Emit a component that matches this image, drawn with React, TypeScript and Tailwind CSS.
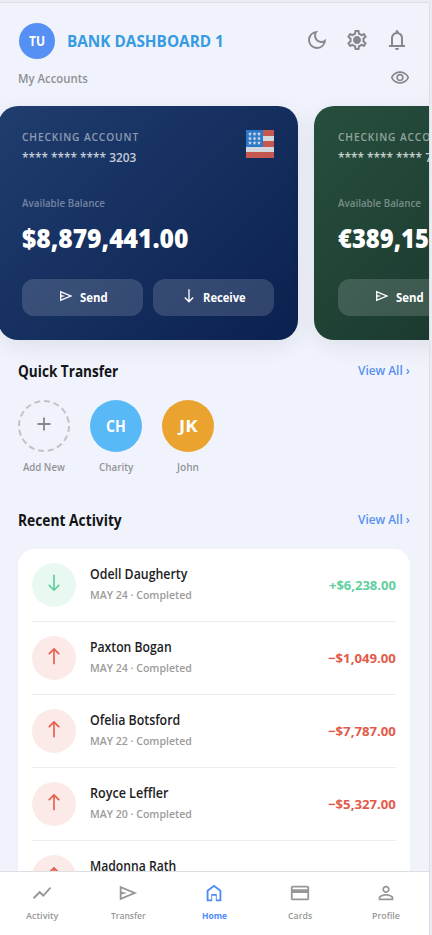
import { useLayoutEffect, useRef, useState } from "react";
import type { ReactNode } from "react";
import {
  MdOutlineDarkMode,
  MdOutlineSettings,
  MdOutlineVisibility,
  MdShowChart,
  MdOutlineCreditCard,
  MdPersonOutline,
} from "react-icons/md";

/** One line of text condensed horizontally to a given width. */
function Fit({ w, className = "", children }: { w: number; className?: string; children: string }) {
  const ref = useRef<HTMLSpanElement>(null);
  const [scale, setScale] = useState(1);
  useLayoutEffect(() => {
    if (ref.current) setScale(w / ref.current.offsetWidth);
  }, [w, children]);
  return (
    <span className={`block shrink-0 whitespace-pre ${className}`} style={{ width: w }}>
      <span ref={ref} className="inline-block origin-left" style={{ transform: `scaleX(${scale})` }}>
        {children}
      </span>
    </span>
  );
}

function Icon({ d, size, className = "" }: { d: string; size: number; className?: string }) {
  return (
    <svg width={size} height={size} viewBox="0 0 24 24" fill="currentColor" className={`shrink-0 ${className}`}>
      <path d={d} />
    </svg>
  );
}

const SEND = "M3 20V4l19 8-19 8zm2-3 11.85-5L5 7v3.5l6 1.5-6 1.5V17z";
const SOUTH = "m12 22-7-7 1.4-1.4 4.6 4.55V2h2v16.15l4.6-4.55L19 15l-7 7z";
const NORTH = "M11 22V5.85L6.4 10.4 5 9l7-7 7 7-1.4 1.4L13 5.85V22h-2z";
const PLUS = "M11 19v-6H5v-2h6V5h2v6h6v2h-6v6h-2z";
const HOME = "M6 19h3v-6h6v6h3v-9l-6-4.5L6 10v9zm-2 2V9l8-6 8 6v12h-6v-6h-4v6H4z";
const BELL =
  "M4 19v-2h2v-7q0-2.075 1.25-3.687T10.5 4.2v-.7q0-.625.438-1.062T12 2t1.063.438T13.5 3.5v.7q2 .5 3.25 2.113T18 10v7h2v2H4zm8 3q-.825 0-1.412-.587T10 20h4q0 .825-.587 1.413T12 22zm-4-5h8v-7q0-1.65-1.175-2.825T12 6 9.175 7.175 8 10v7z";

function UsFlag() {
  const stars = [4, 8.5, 13];
  return (
    <svg width="28" height="28" viewBox="0 0 28 28" className="opacity-85">
      <rect width="28" height="28" fill="#f5f5f5" />
      <rect width="28" height="6" fill="#e4604e" />
      <rect y="11" width="28" height="6" fill="#e4604e" />
      <rect y="22" width="28" height="6" fill="#e4604e" />
      <rect width="17" height="17" fill="#2f86dc" />
      {stars.map((y) =>
        stars.map((x) => (
          <path
            key={`${x}-${y}`}
            transform={`translate(${x} ${y})`}
            fill="#f5f5f5"
            d="M0-2.2.6-.7 2.1-.7.9.3 1.3 1.8 0 .9-1.3 1.8-.9.3-2.1-.7-.6-.7z"
          />
        ))
      )}
    </svg>
  );
}

function AccountCard({
  tone, number, numberW, balance, balanceW, flag,
}: { tone: string; number: string; numberW: number; balance: string; balanceW: number; flag?: ReactNode }) {
  return (
    <div className={`flex h-[234px] w-[300px] shrink-0 flex-col rounded-[20px] px-6 pt-[23px] text-white shadow-[0_6px_24px_rgba(0,0,0,0.08)] ${tone}`}>
      <div className="flex h-[63px] justify-between">
        <div>
          <Fit w={117} className="text-[11.5px] leading-[15px] font-semibold tracking-[1px] text-white/50">CHECKING ACCOUNT</Fit>
          <Fit w={numberW} className="mt-[5px] text-[13px] leading-4 font-semibold text-white/75">{number}</Fit>
        </div>
        {flag && <div className="mt-px">{flag}</div>}
      </div>
      <Fit w={83} className="mt-[3px] text-[11px] leading-4 font-semibold text-white/40">Available Balance</Fit>
      <Fit w={balanceW} className="mt-[11px] text-[27px] leading-[32px] font-extrabold">{balance}</Fit>
      <div className="mt-[25px] flex gap-2.5">
        <div className="flex h-[37px] w-[121px] items-center justify-center gap-[6px] rounded-xl bg-white/15">
          <Icon d={SEND} size={16} className="-mt-1" />
          <Fit w={28} className="-mt-0.5 text-[13px] leading-4 font-bold">Send</Fit>
        </div>
        <div className="flex h-[37px] w-[121px] items-center justify-center gap-[6px] rounded-xl bg-white/15">
          <Icon d={SOUTH} size={16} className="-mt-1" />
          <Fit w={43} className="-mt-0.5 text-[13px] leading-4 font-bold">Receive</Fit>
        </div>
      </div>
    </div>
  );
}

function SectionTitle({ title, w }: { title: string; w: number }) {
  return (
    <div className="flex h-6 items-center justify-between pr-[19px] pl-[18px]">
      <Fit w={w} className="-mt-0.5 text-[15.5px] leading-5 font-bold text-[#131416]">{title}</Fit>
      <Fit w={52} className="-mt-1 text-[13px] leading-5 font-semibold text-[#5790f0]">View All ›</Fit>
    </div>
  );
}

function Contact({ label, w, children }: { label: string; w: number; children: ReactNode }) {
  return (
    <div className="flex w-[52px] flex-col items-center">
      {children}
      <Fit w={w} className="mt-[7px] text-[11px] leading-4 font-semibold text-[#929498]">{label}</Fit>
    </div>
  );
}

const transactions = [
  { name: "Odell Daugherty", w: 97, date: "MAY 24", amount: "+$6,238.00", aw: 67, incoming: true },
  { name: "Paxton Bogan", w: 82, date: "MAY 24", amount: "−$1,049.00", aw: 68 },
  { name: "Ofelia Botsford", w: 90, date: "MAY 22", amount: "−$7,787.00", aw: 68 },
  { name: "Royce Leffler", w: 78, date: "MAY 20", amount: "−$5,327.00", aw: 68 },
  { name: "Madonna Rath", w: 86, date: "MAY 19", amount: "−$2,410.00", aw: 68 },
];

const tabs = [
  { label: "Activity", w: 32.5, icon: <MdShowChart size={22} /> },
  { label: "Transfer", w: 35, icon: <Icon d={SEND} size={22} /> },
  { label: "Home", w: 25, icon: <Icon d={HOME} size={22} />, active: true },
  { label: "Cards", w: 24, icon: <MdOutlineCreditCard size={22} /> },
  { label: "Profile", w: 28, icon: <MdPersonOutline size={22} /> },
];

export default function App() {
  return (
    <div className="h-[935px] w-[432px] overflow-hidden bg-[#e9ecf1] pt-0.5 font-['Open_Sans','Noto_Sans',sans-serif]">
      <div className="flex h-[933px] w-[430px] flex-col overflow-hidden border-t border-r border-[#dcdfe5] bg-[#f0f3fb]">
        <main className="min-h-0 flex-1 overflow-hidden">
          <header className="flex h-[62px] items-center pt-[14px] pr-5 pl-[19px]">
            <div className="flex size-9 items-center justify-center rounded-full bg-[#5790f4] text-white">
              <Fit w={16} className="text-[13.5px] leading-4 font-bold">TU</Fit>
            </div>
            <Fit w={157} className="ml-3 text-[16.5px] leading-5 font-bold text-[#369be3]">BANK DASHBOARD 1</Fit>
            <div className="ml-auto flex gap-4 text-[#86888c]">
              <MdOutlineDarkMode size={24} className="-mt-0.5" />
              <span className="relative -mt-0.5 block size-6">
                <MdOutlineSettings size={24} />
                <span className="absolute top-[9px] left-[9px] size-1.5 rounded-full bg-[#86888c]" />
              </span>
              <Icon d={BELL} size={24} className="-mt-0.5" />
            </div>
          </header>

          <div className="flex h-[27px] items-center justify-between pr-[19px] pl-[18px]">
            <Fit w={70} className="-mt-0.5 text-[13px] leading-4 font-semibold text-[#8e9094]">My Accounts</Fit>
            <MdOutlineVisibility size={20} className="-mt-0.5 text-[#86888c]" />
          </div>

          <div className="-ml-0.5 flex w-[620px] gap-4 pt-[14px]">
            <AccountCard
              tone="bg-[linear-gradient(135deg,#1f3d6e_0%,#0b2150_100%)]"
              number="**** **** **** 3203" numberW={114}
              balance="$8,879,441.00" balanceW={166} flag={<UsFlag />}
            />
            <AccountCard
              tone="bg-[linear-gradient(135deg,#274f3d_0%,#15302a_100%)]"
              number="**** **** **** 7841" numberW={114}
              balance="€389,152.00" balanceW={140}
            />
          </div>

          <div className="pt-5">
            <SectionTitle title="Quick Transfer" w={100} />
            <div className="flex gap-5 pt-4 pl-[18px]">
              <Contact label="Add New" w={42}>
                <div className="flex size-[52px] items-center justify-center rounded-full border-2 border-dashed border-[#c0c2c6] text-[#86888c]">
                  <Icon d={PLUS} size={22} className="-mt-1" />
                </div>
              </Contact>
              <Contact label="Charity" w={34}>
                <div className="flex size-[52px] items-center justify-center rounded-full bg-[#58b9f6] text-white">
                  <Fit w={20} className="text-[15.5px] leading-5 font-bold">CH</Fit>
                </div>
              </Contact>
              <Contact label="John" w={22}>
                <div className="flex size-[52px] items-center justify-center rounded-full bg-[#eba330] text-white">
                  <Fit w={18} className="text-[15.5px] leading-5 font-bold">JK</Fit>
                </div>
              </Contact>
            </div>
          </div>

          <div className="pt-[34px]">
            <SectionTitle title="Recent Activity" w={104} />
            <div className="mt-4 mr-[19px] ml-[18px] rounded-2xl bg-white px-3.5 shadow-[0_1px_4px_rgba(0,0,0,0.02)]">
              {transactions.map((t) => (
                <div key={t.name} className="flex h-[73px] items-center border-b border-[#ececec]">
                  <div className={`flex size-11 items-center justify-center rounded-full ${t.incoming ? "bg-[#eaf8f2] text-[#5fd09d]" : "bg-[#fbeae8] text-[#e5604f]"}`}>
                    <Icon d={t.incoming ? SOUTH : NORTH} size={20} className="-mt-1" />
                  </div>
                  <div className="-mt-0.5 ml-3.5">
                    <Fit w={t.w} className="text-[14px] leading-5 font-semibold text-[#1c1d1f]">{t.name}</Fit>
                    <Fit w={102} className="mt-0.5 text-[11.5px] leading-[18px] font-semibold text-[#9b9b9b]">{`${t.date} · Completed`}</Fit>
                  </div>
                  <Fit w={t.aw} className={`ml-auto text-[13px] leading-5 font-bold ${t.incoming ? "text-[#5fd09d]" : "text-[#e25a49]"}`}>{t.amount}</Fit>
                </div>
              ))}
            </div>
          </div>
        </main>

        <nav className="-ml-px grid h-16 shrink-0 grid-cols-5 border-t border-[#dedfe2] bg-white">
          {tabs.map((t) => (
            <div key={t.label} className={`flex flex-col items-center pt-2.5 ${t.active ? "text-[#4e8cf5]" : "text-[#979797]"}`}>
              {t.icon}
              <Fit w={t.w} className={`mt-1 text-[9.5px] leading-4 ${t.active ? "font-bold" : "font-semibold"}`}>{t.label}</Fit>
            </div>
          ))}
        </nav>
      </div>
    </div>
  );
}
